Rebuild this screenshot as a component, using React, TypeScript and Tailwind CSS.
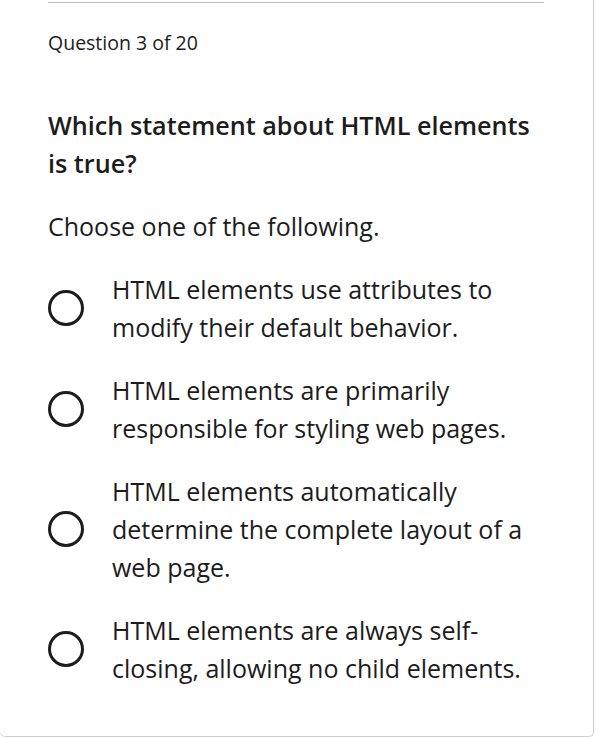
const options = [
  'HTML elements use attributes to modify their default behavior.',
  'HTML elements are primarily responsible for styling web pages.',
  'HTML elements automatically determine the complete layout of a web page.',
  'HTML elements are always self-closing, allowing no child elements.',
];

export default function App() {
  return (
    <div
      className="h-[738px] w-[600px] overflow-hidden bg-white text-[#1c1c1c]"
      style={{ fontFamily: '"Open Sans", "Noto Sans", sans-serif' }}
    >
      <div className="h-[737px] w-[594px] rounded-b-[5px] border-r border-b border-[#cfcfcf] pl-12 pr-[49px] pt-[2px]">
        <hr className="border-t border-[#bdbdbd]" />
        <p className="mt-[26px] text-[19.5px] leading-[28px]">Question 3 of 20</p>
        <h2 className="mt-[49px] text-[25.2px] font-semibold leading-[38px]">
          Which statement about HTML elements is true?
        </h2>
        <p className="mt-[25px] text-[25px] leading-[38px]">Choose one of the following.</p>
        <div className="mt-[25px] flex flex-col gap-[25px]">
          {options.map((o) => (
            <label key={o} className="flex items-center gap-7">
              <span className="h-9 w-9 shrink-0 rounded-full border-[3px] border-[#1c1c1c]" />
              <span className="text-[25px] leading-[38px]">{o}</span>
            </label>
          ))}
        </div>
      </div>
    </div>
  );
}
